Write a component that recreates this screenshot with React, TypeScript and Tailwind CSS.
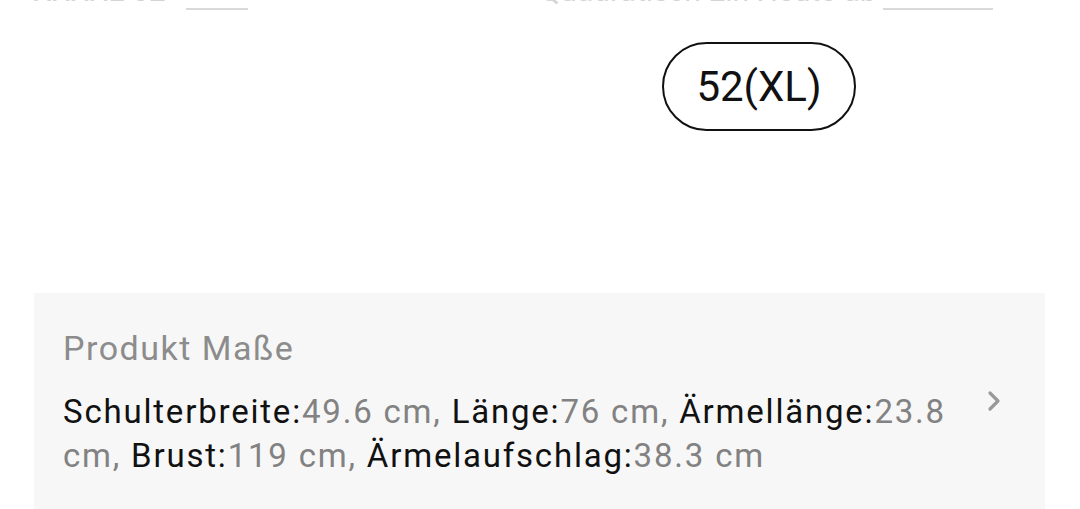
import React from "react";

const measures: { label: string; value: string }[] = [
    { label: "Schulterbreite:", value: "49.6 cm" },
    { label: "Länge:", value: "76 cm" },
    { label: "Ärmellänge:", value: "23.8 cm" },
    { label: "Brust:", value: "119 cm" },
    { label: "Ärmelaufschlag:", value: "38.3 cm" },
];

export default function App() {
    return (
        <div className="w-[1080px] h-[509px] bg-white overflow-hidden flex flex-col font-['Roboto',sans-serif]">
            {/* cut-off row from the previous section */}
            <div className="h-[10px] overflow-hidden flex text-[30px] leading-[34px] text-[#d4d4d4] whitespace-nowrap">
                <div className="-mt-[26px] flex">
                    <span className="ml-[33px]">XXXXL 52</span>
                    <span className="ml-[20px] border-b-2 border-[#d9d9d9] w-[62px]"></span>
                </div>
                <div className="-mt-[26px] flex ml-[292px]">
                    <span>Quadratisch Ein Heute ab</span>
                    <span className="ml-[6px] border-b-2 border-[#d9d9d9] w-[110px]"></span>
                </div>
            </div>

            {/* size option */}
            <div className="h-[283px] pl-[662px] pt-[32px]">
                <div className="w-[194px] h-[89px] rounded-full border-[2.5px] border-[#111] flex items-center justify-center text-[42px] text-[#111]">
                    52(XL)
                </div>
            </div>

            {/* product measures */}
            <div className="ml-[34px] w-[1011px] flex-1 bg-[#f7f7f7] pl-[29px] pt-[33px]">
                <div className="text-[34px] leading-[44px] tracking-[1.5px] text-[#8c8c8c]">Produkt Maße</div>
                <div className="flex mt-[20px]">
                    <p className="w-[900px] text-[33px] leading-[44px] tracking-[1.8px]">
                        {measures.map((m, i) => {
                            // split value so that no span wraps across lines
                            const [num, unit] = m.value.split(" ");
                            const comma = i < measures.length - 1 ? "," : "";
                            return (
                                <React.Fragment key={m.label}>
                                    <span className="text-[#111]">{m.label}</span>
                                    <span className="text-[#828282]">{num}</span>{" "}
                                    <span className="text-[#828282]">{unit + comma}</span>
                                    {comma ? " " : ""}
                                </React.Fragment>
                            );
                        })}
                    </p>
                    <svg className="ml-[23px] -mt-[1px]" width="16" height="24" viewBox="0 0 16 24" fill="none">
                        <path d="M4 4 L12 12 L4 20" stroke="#999999" strokeWidth="3.2" strokeLinecap="round" strokeLinejoin="round" />
                    </svg>
                </div>
            </div>
        </div>
    );
}
